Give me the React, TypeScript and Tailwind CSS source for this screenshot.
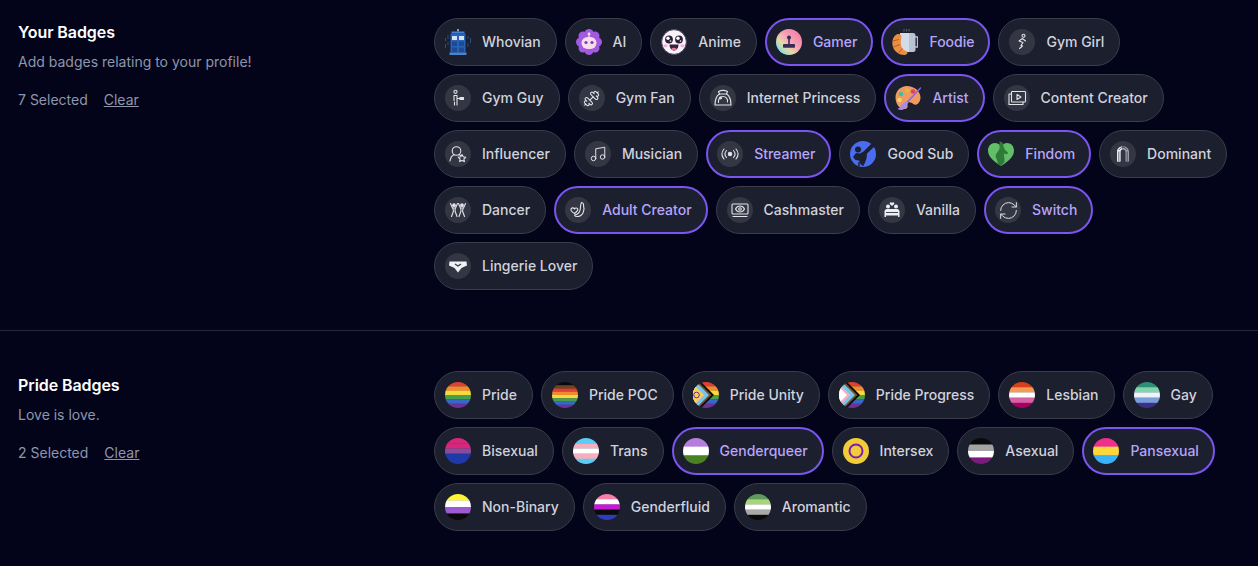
import type { ReactNode } from 'react';
import { Dumbbell, Music, RefreshCw } from 'lucide-react';

type Badge = { label: string; icon: ReactNode; selected?: boolean };

const Stripes = ({ colors }: { colors: string[] }) => (
  <svg viewBox={`0 0 26 ${colors.length}`} preserveAspectRatio="none" className="h-full w-full">
    {colors.map((c, i) => (
      <rect key={i} x="0" y={i} width="26" height="1.05" fill={c} />
    ))}
  </svg>
);

const Flag = ({ colors }: { colors: string[] }) => (
  <span className="block h-[26px] w-[26px] shrink-0 overflow-hidden rounded-full">
    <Stripes colors={colors} />
  </span>
);

const Line = ({ children }: { children: ReactNode }) => (
  <span className="flex h-[26px] w-[26px] shrink-0 items-center justify-center rounded-full bg-[#343743] text-[#e2e4ea]">
    {children}
  </span>
);

const LineSvg = ({ children }: { children: ReactNode }) => (
  <svg viewBox="0 0 26 26" className="h-[26px] w-[26px]" fill="none" stroke="currentColor" strokeWidth="1.1" strokeLinecap="round" strokeLinejoin="round">
    {children}
  </svg>
);

const Tardis = () => (
  <svg viewBox="0 0 26 26" className="h-[26px] w-[26px] shrink-0">
    <path d="M0.5 9v3M0.5 15v4M3 6v4M3 13v3M23 7v3M23 14v4M25.500 9v5" stroke="#2f5a9c" strokeWidth="0.8" />
    <rect x="12" y="0" width="2" height="2.500" fill="#6f9fe0" />
    <rect x="6.500" y="2.500" width="13" height="2" fill="#4a82d4" />
    <rect x="5.500" y="4.500" width="15" height="19" fill="#2a62b8" />
    <rect x="4.500" y="23.500" width="17" height="2.500" fill="#4a82d4" />
    <rect x="7" y="7" width="5" height="4" fill="#d5e2f2" />
    <rect x="14" y="7" width="5" height="4" fill="#d5e2f2" />
    <rect x="7" y="12.500" width="5" height="4.500" fill="#1c4a94" />
    <rect x="14" y="12.500" width="5" height="4.500" fill="#1c4a94" />
    <rect x="7" y="18.500" width="5" height="4.500" fill="#1c4a94" />
    <rect x="14" y="18.500" width="5" height="4.500" fill="#1c4a94" />
  </svg>
);

const AiBot = () => (
  <svg viewBox="0 0 26 26" className="h-[26px] w-[26px] shrink-0" fill="#a25ae0">
    <circle cx="13" cy="13" r="10" />
    <circle cx="13" cy="4.500" r="4.500" />
    <circle cx="13" cy="21.500" r="4.500" />
    <circle cx="4.500" cy="13" r="4.500" />
    <circle cx="21.500" cy="13" r="4.500" />
    <circle cx="7" cy="7" r="4.500" />
    <circle cx="19" cy="7" r="4.500" />
    <circle cx="7" cy="19" r="4.500" />
    <circle cx="19" cy="19" r="4.500" />
    <circle cx="13" cy="5" r="1.400" fill="#f6dfe9" />
    <rect x="12.400" y="5.500" width="1.200" height="3" fill="#f6dfe9" />
    <rect x="5.500" y="8" width="15" height="12" rx="6" fill="#f6dfe9" />
    <circle cx="10" cy="13.500" r="1.600" fill="#7a3bbd" />
    <circle cx="16" cy="13.500" r="1.600" fill="#7a3bbd" />
  </svg>
);

const Anime = () => (
  <svg viewBox="0 0 26 26" className="h-[26px] w-[26px] shrink-0">
    <circle cx="13" cy="13" r="12.400" fill="#f7f3f8" stroke="#4a3a5c" strokeWidth="1" />
    <circle cx="8" cy="10.500" r="3.900" fill="#2a1f38" />
    <circle cx="18" cy="10.500" r="3.900" fill="#2a1f38" />
    <circle cx="7" cy="9.300" r="1.700" fill="#fff" />
    <circle cx="17" cy="9.300" r="1.700" fill="#fff" />
    <circle cx="9.500" cy="12" r="0.800" fill="#fff" />
    <circle cx="19.500" cy="12" r="0.800" fill="#fff" />
    <ellipse cx="4.500" cy="16.800" rx="2.200" ry="1.500" fill="#f0b0dc" />
    <ellipse cx="21.500" cy="16.800" rx="2.200" ry="1.500" fill="#f0b0dc" />
    <path d="M8.500 15.500h9c0 3.500-2 6-4.500 6s-4.500-2.500-4.500-6z" fill="#3a2040" />
    <ellipse cx="13" cy="20" rx="2.500" ry="1.300" fill="#ef6f9f" />
  </svg>
);

const Gamer = () => (
  <svg viewBox="0 0 26 26" className="h-[26px] w-[26px] shrink-0">
    <defs>
      <linearGradient id="gamerFill" x1="0.100" y1="0.900" x2="0.900" y2="0.100">
        <stop offset="0" stopColor="#6ee0e8" />
        <stop offset="0.300" stopColor="#e6d8a8" />
        <stop offset="0.600" stopColor="#f6a0b8" />
        <stop offset="1" stopColor="#f07fa0" />
      </linearGradient>
    </defs>
    <circle cx="13" cy="13" r="13" fill="url(#gamerFill)" />
    <circle cx="13" cy="8.500" r="2" fill="#3a2a55" />
    <rect x="12.200" y="10" width="1.600" height="5" fill="#3a2a55" />
    <rect x="7" y="15" width="12" height="3.800" rx="0.800" fill="#3a2a55" />
  </svg>
);

const Foodie = () => (
  <svg viewBox="0 0 26 26" className="h-[26px] w-[26px] shrink-0">
    <path d="M12 0c.5 1-.5 1.500 0 2.500M14.500 0c.5 1-.5 1.500 0 2.500M17 0c.5 1-.5 1.500 0 2.500" stroke="#8a8d99" strokeWidth="0.700" fill="none" />
    <path d="M23 8h2.500v10H23" stroke="#b9bfcd" strokeWidth="1.300" fill="none" />
    <rect x="8" y="4" width="15.500" height="19" rx="2.500" fill="#b8c3d6" />
    <path d="M8 4h9v19H10A2 2 0 0 1 8 21z" fill="#d3dbe8" />
    <path d="M4.500 5.500C.5 8-.5 13.500 1 18c1.500 4.500 6 8 11.500 8 2.500 0 3.500-2 2.500-3.500-3-1-5.500-3-6-6.500-.5-3 0-6 .5-8 0-2.500-3-3.700-5-2.500z" fill="#ea8f42" />
    <path d="M0.500 12l6.500-1.500M1.500 18l6.500-2.500M6.500 24l4-4.500" stroke="#b85e22" strokeWidth="1" fill="none" />
  </svg>
);

const Artist = () => (
  <svg viewBox="0 0 26 26" className="h-[26px] w-[26px] shrink-0">
    <path d="M12 1C5.500 1 .5 6 .5 12.500.5 18.500 4 24 9.500 24c3 0 3.500-2.500 3-4-.5-2 1-3 3-2.500 2.500.5 3.500 3 6 2 2.500-1 4-4 4-7C25.500 6 19 1 12 1z" fill="#ee9a62" />
    <circle cx="6" cy="9" r="2.300" fill="#3fbfa0" />
    <circle cx="12" cy="5.500" r="2.300" fill="#e8b53e" />
    <circle cx="18" cy="6.500" r="2.300" fill="#d8446a" />
    <circle cx="4.500" cy="15" r="2.300" fill="#f3d65a" />
    <path d="M25.500 3L11.500 18" stroke="#8a66e0" strokeWidth="1.500" strokeLinecap="round" />
    <path d="M11.500 16.500l-3 1.500c-2 1-2.500 4.500-6 6 4 2 8 .5 9-3 .3-1.200.8-2.200 1.500-3z" fill="#a78bf0" />
  </svg>
);

const GoodSub = () => (
  <svg viewBox="0 0 26 26" className="h-[26px] w-[26px] shrink-0">
    <circle cx="13" cy="13" r="13" fill="#4a6cf0" />
    <path d="M22 2l3 3-8 7.500-.5 5-2 5.500-3.500 1-2-4.500-3.500-.5L3 16l3-4 4 .5 3.500-2z" fill="#1c1f2e" />
    <circle cx="8" cy="8.500" r="3" fill="#1c1f2e" />
    <path d="M9 21v4M13 22v3" stroke="#1c1f2e" strokeWidth="1.500" />
  </svg>
);

const Findom = () => (
  <svg viewBox="0 0 26 26" className="h-[26px] w-[26px] shrink-0">
    <path d="M13 25C8 21.500 0 17 0 9.500 0 5 3 2 7 2c2.500 0 4.800 1.300 6 3.500C14.200 3.300 16.500 2 19 2c4 0 7 3 7 7.500 0 7.500-8 12-13 15.500z" fill="#62bf68" />
    <path d="M11.500 .5c2.500-.5 4 2 4 4.500 0 2 1.500 3 2 4.500l2.500 2-1 2-3-1c0 4 1 6.500.5 8.500L13 25l-3-2c-.5-3-1.500-5-2.500-8 1-4 4-5 4-8.500z" fill="#2f7a38" />
  </svg>
);

const GymGuy = () => (
  <LineSvg>
    <circle cx="10.500" cy="6.800" r="1.600" />
    <path d="M9 10.500h3v9.500M9 10.500v5M9.500 17v3M12 13.500h3" />
    <path d="M15 12.500h3.500v2H15z" fill="currentColor" />
  </LineSvg>
);

const GymGirl = () => (
  <LineSvg>
    <circle cx="14.500" cy="6.800" r="1.500" />
    <path d="M13.500 9.500l-3.500 2.500 4 1.500-2 3 1.500.5-3 2.500M14 10l2.500 2" />
  </LineSvg>
);

const Princess = () => (
  <LineSvg>
    <path d="M5 20c0-5.500 2-9.500 4.500-11h7c2.500 1.500 4.500 5.500 4.500 11z" />
    <path d="M9.500 9L8.500 6.500c2.500-1.200 6.500-1.200 9 0L16.500 9" />
    <path d="M8.500 17.500c-.5-3.500 1.500-6 4.500-6s5 2.500 4.500 5.500" />
    <circle cx="10.500" cy="13" r="0.900" fill="currentColor" />
  </LineSvg>
);

const ContentCreator = () => (
  <LineSvg>
    <rect x="7.500" y="6.500" width="14" height="10.500" rx="0.800" />
    <path d="M7.500 9H5v10.500h14V17" />
    <path d="M13 9.500v5l4-2.500z" />
  </LineSvg>
);

const Influencer = () => (
  <LineSvg>
    <circle cx="11.500" cy="10" r="4.300" />
    <path d="M5 20c.5-3 2-5.500 4-6.300M14 13.500l1.500 1" />
    <path d="M17 13.500l1.200 2.300 2.600.4-1.900 1.800.5 2.600-2.400-1.200-2.400 1.200.5-2.600-1.900-1.800 2.600-.4z" />
  </LineSvg>
);

const Streamer = () => (
  <LineSvg>
    <circle cx="13" cy="13" r="1.700" fill="currentColor" />
    <path d="M9.500 9.500c-1.800 2-1.800 5 0 7M16.500 9.500c1.800 2 1.800 5 0 7M7 8c-2.500 3-2.500 7 0 10M19 8c2.500 3 2.500 7 0 10" />
  </LineSvg>
);

const Dominant = () => (
  <svg viewBox="0 0 26 26" className="h-[26px] w-[26px]">
    <path d="M7 20.500V11c0-3.500 2.500-5.500 6-5.500s6 2 6 5.500v9.500h-3.500V11c0-1.500-1-2.500-2.500-2.500s-2.500 1-2.500 2.500v9.500z" fill="#9a9da9" />
    <path d="M7 20.500V11c0-3 2-5 5-5.400V8.600c-1 .3-1.500 1.200-1.500 2.400v9.500z" fill="#eceef2" />
    <path d="M8.800 20V10.500M17.200 20V10.500M9 9c1-1.800 2.500-2.500 4-2.500s3 .7 4 2.500" fill="none" stroke="#343743" strokeWidth="0.700" />
  </svg>
);

const Dancer = () => (
  <LineSvg>
    <circle cx="9" cy="8.200" r="1.300" fill="currentColor" />
    <circle cx="17" cy="8.200" r="1.300" fill="currentColor" />
    <path d="M5.500 6.500l2 4.500h3l2-4.500M7.800 11l.7 3-2 5.500M10.300 11l-.3 3 2 5.500" />
    <path d="M20.500 6.500l-2 4.500h-3l-2-4.500M18.200 11l-.7 3 2 5.500M15.700 11l.3 3-2 5.500" />
  </LineSvg>
);

const AdultCreator = () => (
  <LineSvg>
    <path d="M16.500 5.500c1.500.3 2.500 1.500 2 3 1.500 4.500-.5 10.500-5.500 11-1.500.2-3-.3-3.500-1.500 4-.5 6-3.500 6-8.500 0-1.500.5-2.500 1-4z" />
    <path d="M9.500 16.500C7 15 5.500 13.500 6 12c.5-1.500 2.800-1.500 3.500 0 .5-1.500 3.300-1.500 3.300.5 0 1-1.300 2.500-3.300 4z" />
  </LineSvg>
);

const Cashmaster = () => (
  <LineSvg>
    <rect x="5" y="7" width="16" height="10" rx="1" />
    <circle cx="13" cy="12" r="1.300" />
    <path d="M8.500 12c1-2 2.800-3 4.500-3s3.500 1 4.500 3c-1 2-2.800 3-4.500 3s-3.500-1-4.500-3z" />
    <path d="M6 19.500h14" />
  </LineSvg>
);

const Vanilla = () => (
  <svg viewBox="0 0 26 26" className="h-[26px] w-[26px]" fill="#eceef2">
    <path d="M13 5.800c-1.200-1.300-3 0-2 1.400L13 9l2-1.800c1-1.400-.8-2.700-2-1.400z" />
    <circle cx="9" cy="9.500" r="2" />
    <circle cx="17" cy="9.500" r="2" />
    <path d="M5.500 20v-5.500c0-1.500 1-2.500 2.500-2.500h10c1.500 0 2.500 1 2.500 2.500V20H19v-1.500H7V20z" />
    <rect x="7" y="15" width="12" height="0.900" fill="#343743" />
  </svg>
);

const Lingerie = () => (
  <svg viewBox="0 0 26 26" className="h-[26px] w-[26px]">
    <path d="M4.500 8.500h17l.5 4-5.500 2.500-3.500 4.500-3.500-4.500L4 12.500z" fill="#f0f1f5" />
    <path d="M10 11l3 2 3-2" fill="none" stroke="#343743" strokeWidth="1.200" />
  </svg>
);

const Chevrons = ({ unity }: { unity?: boolean }) => (
  <span className="relative block h-[26px] w-[26px] shrink-0 overflow-hidden rounded-full">
    <Stripes colors={['#e0402f', '#f08c30', '#f7d840', '#47a04a', '#3668c8', '#6a3398']} />
    <svg viewBox="0 0 26 26" className="absolute inset-0 h-full w-full">
      <path d="M0 0h8l13 13L8 26H0z" fill="#0a0a0a" />
      <path d="M0 0h5.500l13 13-13 13H0z" fill="#7a4e2b" />
      <path d="M0 0h3l13 13L3 26H0z" fill="#6fc8ef" />
      <path d="M0 1.500l11.500 11.500L0 24.500z" fill="#f4aebd" />
      <path d="M0 5l8 8-8 8z" fill="#fff" />
      {unity && <path d="M0 2.500l10.500 10.500L0 23.500z" fill="#f4d54a" />}
      {unity && <circle cx="3.500" cy="13" r="2.800" fill="none" stroke="#7a1fb0" strokeWidth="1" />}
    </svg>
  </span>
);

const Intersex = () => (
  <svg viewBox="0 0 26 26" className="h-[26px] w-[26px] shrink-0">
    <circle cx="13" cy="13" r="13" fill="#f2cc38" />
    <circle cx="13" cy="13" r="6.500" fill="none" stroke="#7a1fb0" strokeWidth="2" />
  </svg>
);

const yourBadges: Badge[] = [
  { label: 'Whovian', icon: <Tardis /> },
  { label: 'AI', icon: <AiBot /> },
  { label: 'Anime', icon: <Anime /> },
  { label: 'Gamer', icon: <Gamer />, selected: true },
  { label: 'Foodie', icon: <Foodie />, selected: true },
  { label: 'Gym Girl', icon: <Line><GymGirl /></Line> },
  { label: 'Gym Guy', icon: <Line><GymGuy /></Line> },
  { label: 'Gym Fan', icon: <Line><Dumbbell size={17} strokeWidth={1.5} /></Line> },
  { label: 'Internet Princess', icon: <Line><Princess /></Line> },
  { label: 'Artist', icon: <Artist />, selected: true },
  { label: 'Content Creator', icon: <Line><ContentCreator /></Line> },
  { label: 'Influencer', icon: <Line><Influencer /></Line> },
  { label: 'Musician', icon: <Line><Music size={18} strokeWidth={1.3} /></Line> },
  { label: 'Streamer', icon: <Line><Streamer /></Line>, selected: true },
  { label: 'Good Sub', icon: <GoodSub /> },
  { label: 'Findom', icon: <Findom />, selected: true },
  { label: 'Dominant', icon: <Line><Dominant /></Line> },
  { label: 'Dancer', icon: <Line><Dancer /></Line> },
  { label: 'Adult Creator', icon: <Line><AdultCreator /></Line>, selected: true },
  { label: 'Cashmaster', icon: <Line><Cashmaster /></Line> },
  { label: 'Vanilla', icon: <Line><Vanilla /></Line> },
  { label: 'Switch', icon: <Line><RefreshCw size={21} strokeWidth={1.1} /></Line>, selected: true },
  { label: 'Lingerie Lover', icon: <Line><Lingerie /></Line> },
];

const prideBadges: Badge[] = [
  { label: 'Pride', icon: <Flag colors={['#e0402f', '#f08c30', '#f7d840', '#47a04a', '#3668c8', '#6a3398']} /> },
  { label: 'Pride POC', icon: <Flag colors={['#0a0a0a', '#6b4526', '#e0402f', '#f08c30', '#f7d840', '#47a04a', '#3668c8', '#6a3398']} /> },
  { label: 'Pride Unity', icon: <Chevrons unity /> },
  { label: 'Pride Progress', icon: <Chevrons /> },
  { label: 'Lesbian', icon: <Flag colors={['#d53f1c', '#f29a56', '#ffffff', '#d562a4', '#a30262']} /> },
  { label: 'Gay', icon: <Flag colors={['#2f8f72', '#7fd6ae', '#eef2fa', '#7b9edb', '#3d2f85']} /> },
  { label: 'Bisexual', icon: <Flag colors={['#d7277b', '#d7277b', '#8e4a9a', '#1f3aa8', '#1f3aa8']} /> },
  { label: 'Trans', icon: <Flag colors={['#5bcdf5', '#f4aebd', '#ffffff', '#f4aebd', '#5bcdf5']} /> },
  { label: 'Genderqueer', icon: <Flag colors={['#b57edc', '#ffffff', '#4a8123']} />, selected: true },
  { label: 'Intersex', icon: <Intersex /> },
  { label: 'Asexual', icon: <Flag colors={['#0a0a0a', '#a3a3a3', '#ffffff', '#7d1a7d']} /> },
  { label: 'Pansexual', icon: <Flag colors={['#ef2f8c', '#fbd73c', '#3ab2f7']} />, selected: true },
  { label: 'Non-Binary', icon: <Flag colors={['#fcf434', '#ffffff', '#9c59d1', '#0a0a0a']} /> },
  { label: 'Genderfluid', icon: <Flag colors={['#f47fa9', '#ffffff', '#c51bd6', '#0a0a0a', '#2f3cbe']} /> },
  { label: 'Aromantic', icon: <Flag colors={['#5d9a5c', '#a8d47a', '#ffffff', '#a9a9a9', '#0a0a0a']} /> },
];

const BadgeChip = ({ badge }: { badge: Badge }) => (
  <button
    type="button"
    className={
      badge.selected
        ? 'flex h-12 items-center gap-[11px] rounded-full border-2 border-[#7a55ee] bg-[#1c1f2e] pl-[9px] pr-[14px] text-sm font-medium text-[#b7a5f8]'
        : 'flex h-12 items-center gap-[11px] rounded-full border border-[#3a3c49] bg-[#1c1f2e] pl-[10px] pr-[15px] text-sm font-medium text-[#d0d2dc]'
    }
  >
    <span className="flex h-[26px] w-[26px] shrink-0 items-center justify-center">{badge.icon}</span>
    {badge.label}
  </button>
);

const Section = ({ title, description, count, badges }: { title: string; description: string; count: number; badges: Badge[] }) => (
  <section className="flex pl-[18px] pr-[18px]">
    <div className="w-[416px] shrink-0 pt-0.5">
      <h2 className="text-base font-semibold leading-6 tracking-[-0.08px] text-white">{title}</h2>
      <p className="mt-2 text-sm leading-5 text-[#8f96ab]">{description}</p>
      <div className="mt-[18px] flex gap-4 text-sm leading-5 text-[#8f96ab]">
        <span>{count} Selected</span>
        <button type="button" className="underline">Clear</button>
      </div>
    </div>
    <div className="flex flex-1 flex-wrap content-start gap-2">
      {badges.map((badge) => (
        <BadgeChip key={badge.label} badge={badge} />
      ))}
    </div>
  </section>
);

export default function App() {
  return (
    <div className="h-[566px] overflow-hidden bg-[#03041a] pt-[18px] font-[Inter,sans-serif]">
      <Section title="Your Badges" description="Add badges relating to your profile!" count={7} badges={yourBadges} />
      <div className="mt-10 mb-10 h-px bg-[#262836]" />
      <Section title="Pride Badges" description="Love is love." count={2} badges={prideBadges} />
    </div>
  );
}
